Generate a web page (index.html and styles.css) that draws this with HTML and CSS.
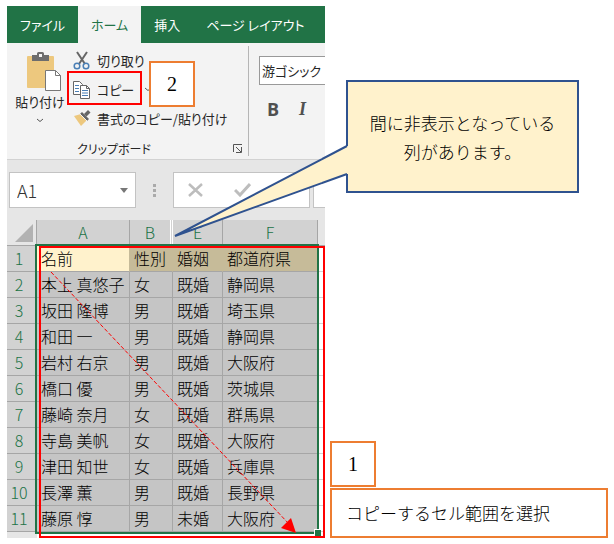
FILE: index.html
```
<!DOCTYPE html>
<html lang="ja">
<head>
    <meta charset="UTF-8">
    <meta name="viewport" content="width=device-width, initial-scale=1.0">
    <title>セル範囲のコピー</title>
    <link rel="stylesheet" href="styles.css">
</head>
<body>

    <div class="guide">
        <div class="excel">
            <nav class="tabs">
                <button class="tab">ファイル</button>
                <button class="tab active">ホーム</button>
                <button class="tab">挿入</button>
                <button class="tab">ページ レイアウト</button>
            </nav>

            <div class="ribbon">
                <section class="clipboard">
                    <button class="paste">
                        <svg width="44" height="40" viewBox="-8 0 44 40">
                            <rect x="1" y="4" width="27" height="32" rx="1" fill="#edc87e"/>
                            <path d="M6 9V3h5V1.500Q11 0 12.500 0h4Q18 0 18 1.500V3h5v6z" fill="#6d6d6d"/>
                            <rect x="13" y="2" width="3" height="3" fill="#f3f3f3"/>
                            <path d="M19.500 18.500h10l5 5v15h-15z" fill="#fff" stroke="#777"/>
                            <path d="M29.500 18.500v5h5" fill="none" stroke="#777"/>
                        </svg>
                        <span>貼り付け</span>
                        <svg width="8" height="5" viewBox="0 0 8 5"><path d="M1 1l3 2.500L7 1" fill="none" stroke="#555"/></svg>
                    </button>
                    <div class="commands">
                        <button class="command">
                            <svg width="18" height="20" viewBox="0 0 18 20">
                                <path d="M4 1l8 12M14 1L6 13" fill="none" stroke="#666" stroke-width="2"/>
                                <circle cx="4" cy="15" r="2.800" fill="none" stroke="#4a7fb5" stroke-width="1.500"/>
                                <circle cx="13" cy="15" r="2.800" fill="none" stroke="#4a7fb5" stroke-width="1.500"/>
                            </svg>
                            切り取り
                        </button>
                        <div class="copy-row">
                            <button class="command copy">
                                <svg width="18" height="20" viewBox="0 0 18 20">
                                    <path d="M.500 1.500h6l3 3v10h-9z" fill="#fff" stroke="#666"/>
                                    <path d="M2 5.500h4M2 8.500h4M2 11.500h4" stroke="#4a7fb5"/>
                                    <path d="M7.500 5.500h6l3 3v10h-9z" fill="#fff" stroke="#666"/>
                                    <path d="M13.500 5.500v3h3" fill="none" stroke="#666"/>
                                    <path d="M9 10.500h6M9 13h6M9 15.500h6" stroke="#4a7fb5"/>
                                </svg>
                                コピー
                            </button>
                            <button class="more" aria-label="コピーのオプション">
                                <svg width="8" height="5" viewBox="0 0 8 5"><path d="M1 1l3 2.500L7 1" fill="none" stroke="#555"/></svg>
                            </button>
                            <span class="step step-two">2</span>
                        </div>
                        <button class="command">
                            <svg width="18" height="20" viewBox="0 0 18 20">
                                <path d="M1 7l7-2 6 6-6 6z" fill="#edc87e"/>
                                <path d="M7 5l2-2 7 7-2 2z" fill="#666"/>
                                <path d="M11 5l4-4 2.500 2.500-4 4z" fill="#666"/>
                                <path d="M7 5l7 7" stroke="#f3f3f3"/>
                            </svg>
                            書式のコピー/貼り付け
                        </button>
                    </div>
                    <footer class="group-name">
                        <span>クリップボード</span>
                        <button class="launcher" aria-label="クリップボードの設定">
                            <svg width="10" height="9" viewBox="0 0 10 9"><path d="M.500 8V.500H9M3 3l5 5M8.500 3v5.500H3" fill="none" stroke="#555"/></svg>
                        </button>
                    </footer>
                </section>
                <section class="font">
                    <input class="font-name" type="text" value="游ゴシック" aria-label="フォント">
                    <div class="font-style">
                        <button class="bold">B</button>
                        <button class="italic">I</button>
                    </div>
                </section>
            </div>

            <div class="formula-bar">
                <div class="name-box">
                    <input type="text" value="A1" aria-label="名前ボックス">
                    <svg width="8" height="5" viewBox="0 0 8 5"><path d="M0 0h8L4 5z" fill="#777"/></svg>
                </div>
                <svg class="dots" width="3" height="13" viewBox="0 0 3 13"><path d="M0 0h3v3H0zM0 5h3v3H0zM0 10h3v3H0z" fill="#aaa"/></svg>
                <div class="entry">
                    <svg width="16" height="14" viewBox="0 0 16 14"><path d="M1 1l13 12M14 1L1 13" stroke="#bdbdbd" stroke-width="2.500"/></svg>
                    <svg width="17" height="14" viewBox="0 0 17 14"><path d="M1 7l5 5L16 1" fill="none" stroke="#bdbdbd" stroke-width="3"/></svg>
                </div>
                <div class="formula"></div>
            </div>

            <div class="sheet">
                <table>
                    <colgroup>
                        <col class="col-no"><col class="col-a"><col class="col-b"><col class="col-e"><col class="col-f"><col>
                    </colgroup>
                    <thead>
                        <tr>
                            <th class="corner"><svg width="18" height="18" viewBox="0 0 18 18"><path d="M18 0v18H0z" fill="#b2b2b2"/></svg></th>
                            <th>A</th><th class="before-hidden">B</th><th>E</th><th>F</th><th class="blank"></th>
                        </tr>
                    </thead>
                    <tbody>
                        <tr class="titles"><th>1</th><td class="current">名前</td><td>性別</td><td>婚姻</td><td>都道府県</td><td class="blank"></td></tr>
                        <tr><th>2</th><td>本上 真悠子</td><td>女</td><td>既婚</td><td>静岡県</td><td class="blank"></td></tr>
                        <tr><th>3</th><td>坂田 隆博</td><td>男</td><td>既婚</td><td>埼玉県</td><td class="blank"></td></tr>
                        <tr><th>4</th><td>和田 一</td><td>男</td><td>既婚</td><td>静岡県</td><td class="blank"></td></tr>
                        <tr><th>5</th><td>岩村 右京</td><td>男</td><td>既婚</td><td>大阪府</td><td class="blank"></td></tr>
                        <tr><th>6</th><td>橋口 優</td><td>男</td><td>既婚</td><td>茨城県</td><td class="blank"></td></tr>
                        <tr><th>7</th><td>藤崎 奈月</td><td>女</td><td>既婚</td><td>群馬県</td><td class="blank"></td></tr>
                        <tr><th>8</th><td>寺島 美帆</td><td>女</td><td>既婚</td><td>大阪府</td><td class="blank"></td></tr>
                        <tr><th>9</th><td>津田 知世</td><td>女</td><td>既婚</td><td>兵庫県</td><td class="blank"></td></tr>
                        <tr><th>10</th><td>長澤 薫</td><td>男</td><td>既婚</td><td>長野県</td><td class="blank"></td></tr>
                        <tr><th>11</th><td>藤原 惇</td><td>男</td><td>未婚</td><td>大阪府</td><td class="blank"></td></tr>
                    </tbody>
                </table>
                <div class="next-row"></div>
                <div class="selection"></div>
                <div class="range-mark"></div>
                <svg class="drag" width="248" height="264" viewBox="0 0 248 264">
                    <path d="M1 1l238 252" stroke="#f00" stroke-dasharray="4 2"/>
                    <path d="M246 262l-15-5 10-10z" fill="#f00"/>
                </svg>
            </div>
        </div>

        <div class="notes">
            <div class="callout">
                <svg class="tail" width="177" height="96" viewBox="0 0 177 96">
                    <path d="M177 2h-3L2 92l172-62h3z" fill="#fff2cc"/>
                    <path d="M174 2L2 92l172-62" fill="none" stroke="#2f528f" stroke-width="2"/>
                </svg>
                <p>間に非表示となっている<br>列があります。</p>
            </div>
            <div class="steps">
                <span class="step">1</span>
                <p class="step-text">コピーするセル範囲を選択</p>
            </div>
        </div>
    </div>

</body>
</html>
```
FILE: styles.css
```
*, *::after {
    box-sizing: border-box;
}

body {
    margin: 0;
    padding: 6px 6px 6px 7px;
    background-color: #ffffff;
    color: #262626;
    font-family: "Noto Sans CJK JP", sans-serif;
}

button, input {
    margin: 0;
    padding: 0;
    border: none;
    background: none;
    color: inherit;
    font: inherit;
}

p {
    margin: 0;
}

svg {
    display: block;
    flex: none;
}

.guide {
    display: grid;
    grid-template-columns: 318px minmax(0, 1fr);
}

/* Ribbon */
.tabs {
    display: flex;
    height: 37px;
    background-color: #217346;
    font-size: 13px;
    font-feature-settings: "palt";
}

.tab {
    padding: 0 13px;
    color: #ffffff;
    white-space: nowrap;
}

.tab.active {
    background-color: #f3f3f3;
    color: #217346;
}

.ribbon {
    display: flex;
    height: 117px;
    padding: 3px 0;
    background-color: #f3f3f3;
    border-bottom: 1px solid #d2d2d2;
    font-size: 13px;
    line-height: 20px;
    font-feature-settings: "palt";
}

.clipboard {
    display: grid;
    grid-template-columns: 66px 1fr;
    grid-template-rows: 87px 1fr;
    width: 242px;
    border-right: 1px solid #b5b5b5;
}

.paste {
    display: flex;
    flex-direction: column;
    align-items: center;
    padding-top: 6px;
    white-space: nowrap;
}

.paste span {
    margin-bottom: 6px;
}

.command {
    display: flex;
    align-items: center;
    gap: 6px;
    height: 29px;
    white-space: nowrap;
}

.copy-row {
    display: flex;
    align-items: center;
    gap: 10px;
    position: relative;
}

.copy {
    position: relative;
}

/* red frame around the copy button */
.copy::after {
    content: "";
    position: absolute;
    top: -4px;
    left: -6px;
    width: 75px;
    height: 34px;
    border: 2px solid #ff0000;
}

.group-name {
    grid-column: 1 / 3;
    display: flex;
    align-items: center;
    justify-content: space-between;
    padding: 8px 5px 0 70px;
    font-size: 12px;
    line-height: 14px;
}

.font {
    flex: 1;
    min-width: 0;
    padding: 10px 0 0 10px;
}

.font-name {
    display: block;
    width: 100%;
    height: 29px;
    padding-left: 2px;
    border: 1px solid #999999;
    border-right: none;
    background-color: #ffffff;
    font-feature-settings: "palt";
}

.font-style {
    display: flex;
    gap: 20px;
    padding: 14px 0 0 8px;
    color: #505050;
    font-size: 18px;
    font-weight: bold;
}

.bold {
    font-family: "Open Sans", sans-serif;
}

.italic {
    font-family: "Liberation Serif", serif;
    font-style: italic;
}

/* Formula bar */
.formula-bar {
    display: flex;
    align-items: center;
    height: 60px;
    padding-left: 2px;
    background-color: #e6e6e6;
}

.name-box, .entry, .formula {
    display: flex;
    align-items: center;
    height: 36px;
    border: 1px solid #c3c3c3;
    background-color: #ffffff;
}

.name-box {
    width: 127px;
    padding: 0 7px;
}

.name-box input {
    flex: 1;
    min-width: 0;
    color: #333333;
    font-size: 18px;
    font-weight: 300;
}

.dots {
    margin: 0 17px;
}

.entry {
    gap: 30px;
    width: 137px;
    padding-left: 14px;
}

.formula {
    flex: 1;
    margin-left: 3px;
    border-right: none;
}

/* Sheet */
.sheet {
    position: relative;
}

table {
    width: 100%;
    border-spacing: 0;
    table-layout: fixed;
    color: #000000;
    font-size: 16px;
    font-weight: 300;
    line-height: 25px;
}

.col-no {
    width: 30px;
}

.col-a {
    width: 93px;
}

.col-b {
    width: 43px;
}

.col-e {
    width: 50px;
}

.col-f {
    width: 95px;
}

th, td {
    height: 26px;
    padding: 0;
    border-right: 1px solid #a6a6a6;
    border-bottom: 1px solid #a6a6a6;
    white-space: nowrap;
}

th {
    background-color: #d2d2d2;
    color: #217346;
    font-weight: 300;
    text-align: center;
}

td {
    padding-left: 4px;
    background-color: #c5c5c5;
}

tbody th {
    padding-right: 5px;
}

.corner {
    padding: 0 0 0 8px;
    background-color: #e6e6e6;
}

/* wide divider where columns C and D are hidden */
.before-hidden {
    border-right: 3px double #ffffff;
    background-color: #d2d2d2;
}

.titles td {
    background-color: #c6bb99;
    border-right-color: #c6bb99;
}

.titles .current {
    background-color: #fff2cc;
}

td.blank, .titles td.blank {
    border-color: #d4d4d4;
    border-right: none;
    background-color: #ffffff;
}

th.blank {
    border-right: none;
    background-color: #e6e6e6;
}

.next-row {
    height: 6px;
    border-left: 30px solid #e6e6e6;
}

.selection {
    position: absolute;
    inset: 24px 6px 4px 28px;
    border: 2px solid #217346;
}

.selection::after {
    content: "";
    position: absolute;
    right: -4px;
    bottom: -4px;
    width: 7px;
    height: 7px;
    border: 1px solid #ffffff;
    border-width: 1px 0 0 1px;
    background-color: #217346;
}

.range-mark {
    position: absolute;
    inset: 26px 0 0 32px;
    border: 2px solid #ff0000;
}

.drag {
    position: absolute;
    top: 51px;
    left: 43px;
}

/* Notes */
.notes {
    display: flex;
    flex-direction: column;
    justify-content: space-between;
    padding: 74px 0 0 5px;
    font-size: 17px;
    font-weight: 300;
    color: #000000;
}

.callout {
    position: relative;
    display: flex;
    align-items: center;
    justify-content: center;
    min-height: 113px;
    margin: 0 29px 0 16px;
    border: 2px solid #2f528f;
    background-color: #fff2cc;
    line-height: 29px;
    text-align: center;
}

.tail {
    position: absolute;
    top: 62px;
    left: -175px;
}

.step {
    display: flex;
    align-items: center;
    justify-content: center;
    width: 46px;
    height: 46px;
    border: 2px solid #ed7d31;
    background-color: #ffffff;
    color: #000000;
    font-family: "Liberation Serif", serif;
    font-size: 20px;
}

.step-two {
    position: absolute;
    top: -14px;
    left: 76px;
}

.step-text {
    margin-top: 1px;
    padding: 7px 14px;
    border: 2px solid #ed7d31;
    line-height: 32px;
}
```
